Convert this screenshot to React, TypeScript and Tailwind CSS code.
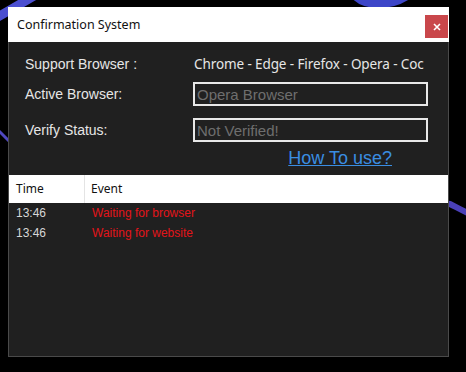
import React from 'react';

const rows = [
    { time: '13:46', event: 'Waiting for browser' },
    { time: '13:46', event: 'Waiting for website' },
];

const Backdrop: React.FC = () => (
    <svg className="absolute inset-0" width="466" height="372" viewBox="0 0 466 372">
        <path d="M-4 18 L34 -4" stroke="#4b4fd0" strokeWidth="9" strokeLinecap="round" />
        <path d="M356 -4 C366 6 390 6 406 -4" stroke="#3d46c8" strokeWidth="9" fill="none" strokeLinecap="round" />
        <path d="M-4 128 C2 134 6 138 10 142" stroke="#5048c0" strokeWidth="3" fill="none" strokeLinecap="round" />
        <path d="M450 204 C456 207 461 210 470 214" stroke="#4a40b8" strokeWidth="6" fill="none" strokeLinecap="round" />
    </svg>
);

const Field: React.FC<{ label: string; value: string }> = ({ label, value }) => (
    <div className="flex items-center h-[24px]">
        <span className="w-[168px] text-[14px] text-[#e6e6e6]">{label}</span>
        <div className="w-[235px] h-[24px] border-2 border-[#e8e8e8] bg-[#202020] flex items-center px-[2px]">
            <span className="text-[15px] leading-none text-[#6e6e6e]">{value}</span>
        </div>
    </div>
);

export default function App() {
    return (
        <div className="relative w-[466px] h-[372px] bg-black overflow-hidden font-['Liberation_Sans',Arial,sans-serif]">
            <Backdrop />
            <div className="relative ml-[8px] pt-[7px] w-[441px] flex flex-col">
                <div className="h-[35px] bg-white flex items-start justify-between pl-[9px]">
                    <span className="mt-[9px] text-[12.5px] text-[#111] font-['Noto_Sans',sans-serif]">Confirmation System</span>
                    <button className="mt-[8px] mr-[1px] w-[23px] h-[23px] bg-[#c9474b] flex items-center justify-center">
                        <svg width="8" height="8" viewBox="0 0 8 8">
                            <path d="M1 1 L7 7 M7 1 L1 7" stroke="#fff" strokeWidth="1.6" />
                        </svg>
                    </button>
                </div>

                <div className="h-[315px] bg-[#202020] border-l border-b border-r border-[#4a4a4a] flex flex-col">
                    <div className="pl-[16px] pt-[10px] flex flex-col">
                        <div className="flex items-center h-[24px]">
                            <span className="w-[169px] text-[14px] text-[#e6e6e6]">Support Browser :</span>
                            <span className="whitespace-nowrap text-[13.5px] tracking-[-0.1px] text-[#e6e6e6] font-['Noto_Sans',sans-serif]">
                                Chrome - Edge - Firefox - Opera - Coc
                            </span>
                        </div>
                        <div className="mt-[6px] flex flex-col gap-[12px]">
                            <Field label="Active Browser:" value="Opera Browser" />
                            <Field label="Verify Status:" value="Not Verified!" />
                        </div>
                        <div className="mt-[6px] h-[20px] flex justify-end pr-[56px]">
                            <a href="#" className="text-[18px] leading-[20px] text-[#3a8ee2] underline">How To use?</a>
                        </div>
                    </div>

                    <div className="mt-[7px] h-[28px] bg-white flex items-stretch text-[12px] text-[#111] font-['Noto_Sans',sans-serif]">
                        <div className="w-[76px] pl-[7px] flex items-center border-r border-[#e4e4e4]">Time</div>
                        <div className="pl-[6px] flex items-center">Event</div>
                    </div>

                    <div className="flex flex-col">
                        {rows.map((r, i) => (
                            <div key={i} className="h-[20px] flex items-center text-[12px]">
                                <span className="w-[83px] pl-[7px] text-[#d6d6d6]">{r.time}</span>
                                <span className="text-[#e3141a]">{r.event}</span>
                            </div>
                        ))}
                    </div>
                </div>
            </div>
        </div>
    );
}
